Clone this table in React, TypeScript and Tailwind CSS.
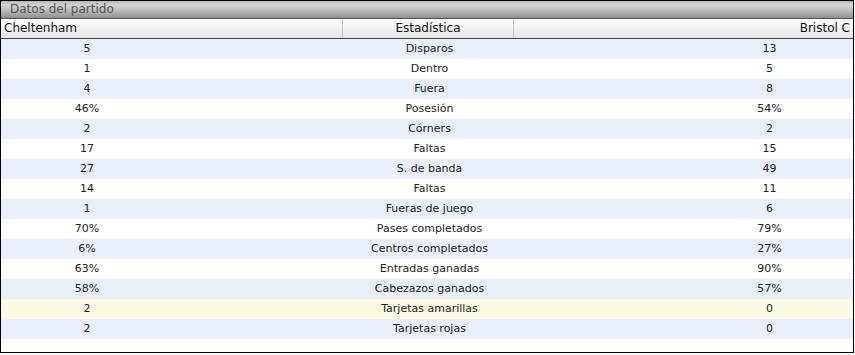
import React from "react";

type Row = { home: string; label: string; away: string; highlight?: boolean };

const rows: Row[] = [
  { home: "5", label: "Disparos", away: "13" },
  { home: "1", label: "Dentro", away: "5" },
  { home: "4", label: "Fuera", away: "8" },
  { home: "46%", label: "Posesión", away: "54%" },
  { home: "2", label: "Córners", away: "2" },
  { home: "17", label: "Faltas", away: "15" },
  { home: "27", label: "S. de banda", away: "49" },
  { home: "14", label: "Faltas", away: "11" },
  { home: "1", label: "Fueras de juego", away: "6" },
  { home: "70%", label: "Pases completados", away: "79%" },
  { home: "6%", label: "Centros completados", away: "27%" },
  { home: "63%", label: "Entradas ganadas", away: "90%" },
  { home: "58%", label: "Cabezazos ganados", away: "57%" },
  { home: "2", label: "Tarjetas amarillas", away: "0", highlight: true },
  { home: "2", label: "Tarjetas rojas", away: "0" },
];

export default function App() {
  return (
    <div className="w-[855px] h-[355px] bg-white font-['DejaVu_Sans',Verdana,sans-serif] text-[11px] text-[#222]">
      <div className="w-[854px] h-[353px] border border-black flex flex-col">
        {/* Title bar */}
        <div className="h-[18px] shrink-0 border-b border-[#555] bg-[linear-gradient(to_bottom,#b8b8b8,#d4d4d4_25%,#a8a8a8_75%,#909090)] pl-[9px] leading-[17px] text-[12px] text-[#555]">
          Datos del partido
        </div>

        {/* Column header */}
        <div className="h-[20px] shrink-0 flex border-b border-[#444] bg-[linear-gradient(to_bottom,#ffffff,#e4e4e4)] leading-[19px] text-[12px] text-[#111]">
          <div className="w-[342px] pl-[3px] border-r border-[#c8c8c8]">Cheltenham</div>
          <div className="w-[171px] text-center border-r border-[#c8c8c8]">Estadística</div>
          <div className="flex-1 text-right pr-[3px]">Bristol C</div>
        </div>

        {/* Stats */}
        <div className="flex-1">
          {rows.map((r, i) => (
            <div
              key={i}
              className={`h-[20px] grid grid-cols-[172px_171px_171px_171px_1fr] leading-[20px] ${
                r.highlight ? "bg-[#fafae4]" : i % 2 === 0 ? "bg-[#e9eff9]" : "bg-white"
              }`}
            >
              <div className="text-center">{r.home}</div>
              <div />
              <div className="text-center">{r.label}</div>
              <div />
              <div className="text-center">{r.away}</div>
            </div>
          ))}
        </div>
      </div>
    </div>
  );
}
